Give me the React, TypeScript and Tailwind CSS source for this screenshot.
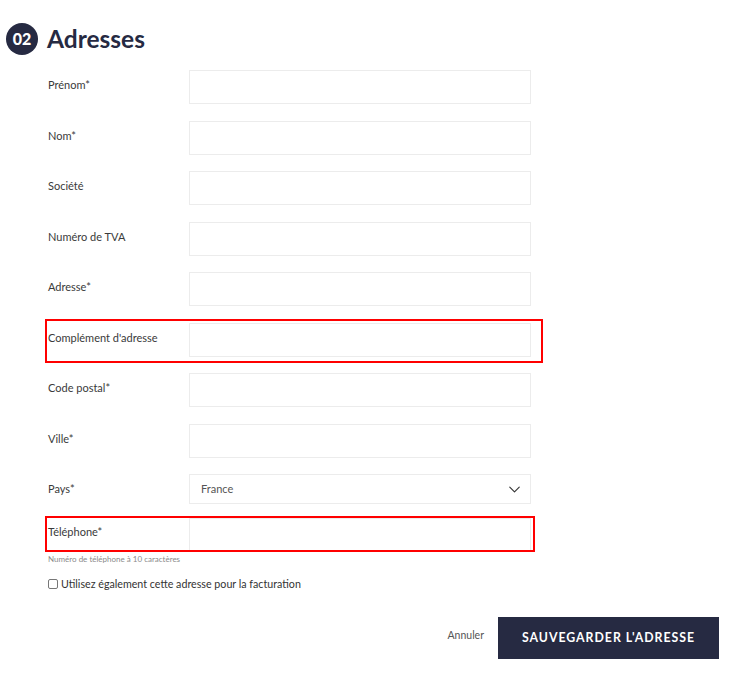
import { ChevronDown } from "lucide-react";

const FIELDS = [
  { label: "Prénom*" },
  { label: "Nom*" },
  { label: "Société" },
  { label: "Numéro de TVA" },
  { label: "Adresse*" },
  { label: "Complément d'adresse", flagged: true },
  { label: "Code postal*" },
  { label: "Ville*" },
];

export default function App() {
  return (
    <div
      className="w-[733px] min-h-[674px] bg-white pt-[23px] pl-[6px] pr-[14px]"
      style={{ fontFamily: "Lato, 'Open Sans', sans-serif" }}
    >
      {/* Header */}
      <div className="flex items-center gap-[9px] h-[32px]">
        <div className="w-[32px] h-[32px] rounded-full bg-[#262a42] flex items-center justify-center text-white text-[16px] font-black leading-none">
          02
        </div>
        <h2 className="text-[24.5px] font-bold text-[#262a42] leading-none">Adresses</h2>
      </div>

      {/* Form */}
      <div className="pl-[42px] mt-[15px] flex flex-col">
        <div className="flex flex-col gap-[16.5px]">
          {FIELDS.map((f) => (
            <div key={f.label} className="relative flex h-[34px]">
              <label className="w-[141px] shrink-0 pt-[8px] text-[11px] leading-[14px] text-[#3a3a3a]">
                {f.label}
              </label>
              <input className="w-[342px] h-[34px] border border-[#ececec] outline-none" />
              {f.flagged && (
                <div className="absolute -left-[3px] -top-[4px] -bottom-[6px] w-[498px] border-2 border-[#ff0000] pointer-events-none" />
              )}
            </div>
          ))}
          <div className="flex h-[30px]">
            <label className="w-[141px] shrink-0 pt-[8px] text-[11px] leading-[14px] text-[#3a3a3a]">
              Pays*
            </label>
            <div className="w-[342px] h-[30px] border border-[#ececec] flex items-center justify-between pl-[11px] pr-[6px]">
              <span className="text-[11px] text-[#555]">France</span>
              <ChevronDown size={19} strokeWidth={1.4} className="text-[#333]" />
            </div>
          </div>
        </div>

        {/* Phone */}
        <div className="relative flex h-[33px] mt-[14px]">
          <label className="w-[141px] shrink-0 pt-[7px] text-[11px] leading-[14px] text-[#3a3a3a]">
            Téléphone*
          </label>
          <input className="w-[342px] h-[33px] border border-[#ececec] outline-none" />
          <div className="absolute -left-[3px] -top-[2px] -bottom-[1px] w-[490px] border-2 border-[#ff0000] pointer-events-none" />
        </div>
        <p className="mt-[3px] text-[8px] leading-[10px] text-[#8a8a8a]">
          Numéro de téléphone à 10 caractères
        </p>

        {/* Checkbox */}
        <label className="mt-[13px] flex items-center gap-[3px] text-[10.7px] leading-[14px] text-[#333]">
          <span className="w-[10px] h-[10px] border border-[#777] rounded-[2px] bg-white" />
          Utilisez également cette adresse pour la facturation
        </label>
      </div>

      {/* Actions */}
      <div className="mt-[26px] flex items-center justify-end gap-[14px]">
        <button className="text-[10.5px] text-[#555] pb-[4px]">Annuler</button>
        <button className="w-[221px] h-[42px] bg-[#262a42] text-white text-[12.3px] font-bold tracking-[0.08em] uppercase">
          Sauvegarder l'adresse
        </button>
      </div>
    </div>
  );
}
